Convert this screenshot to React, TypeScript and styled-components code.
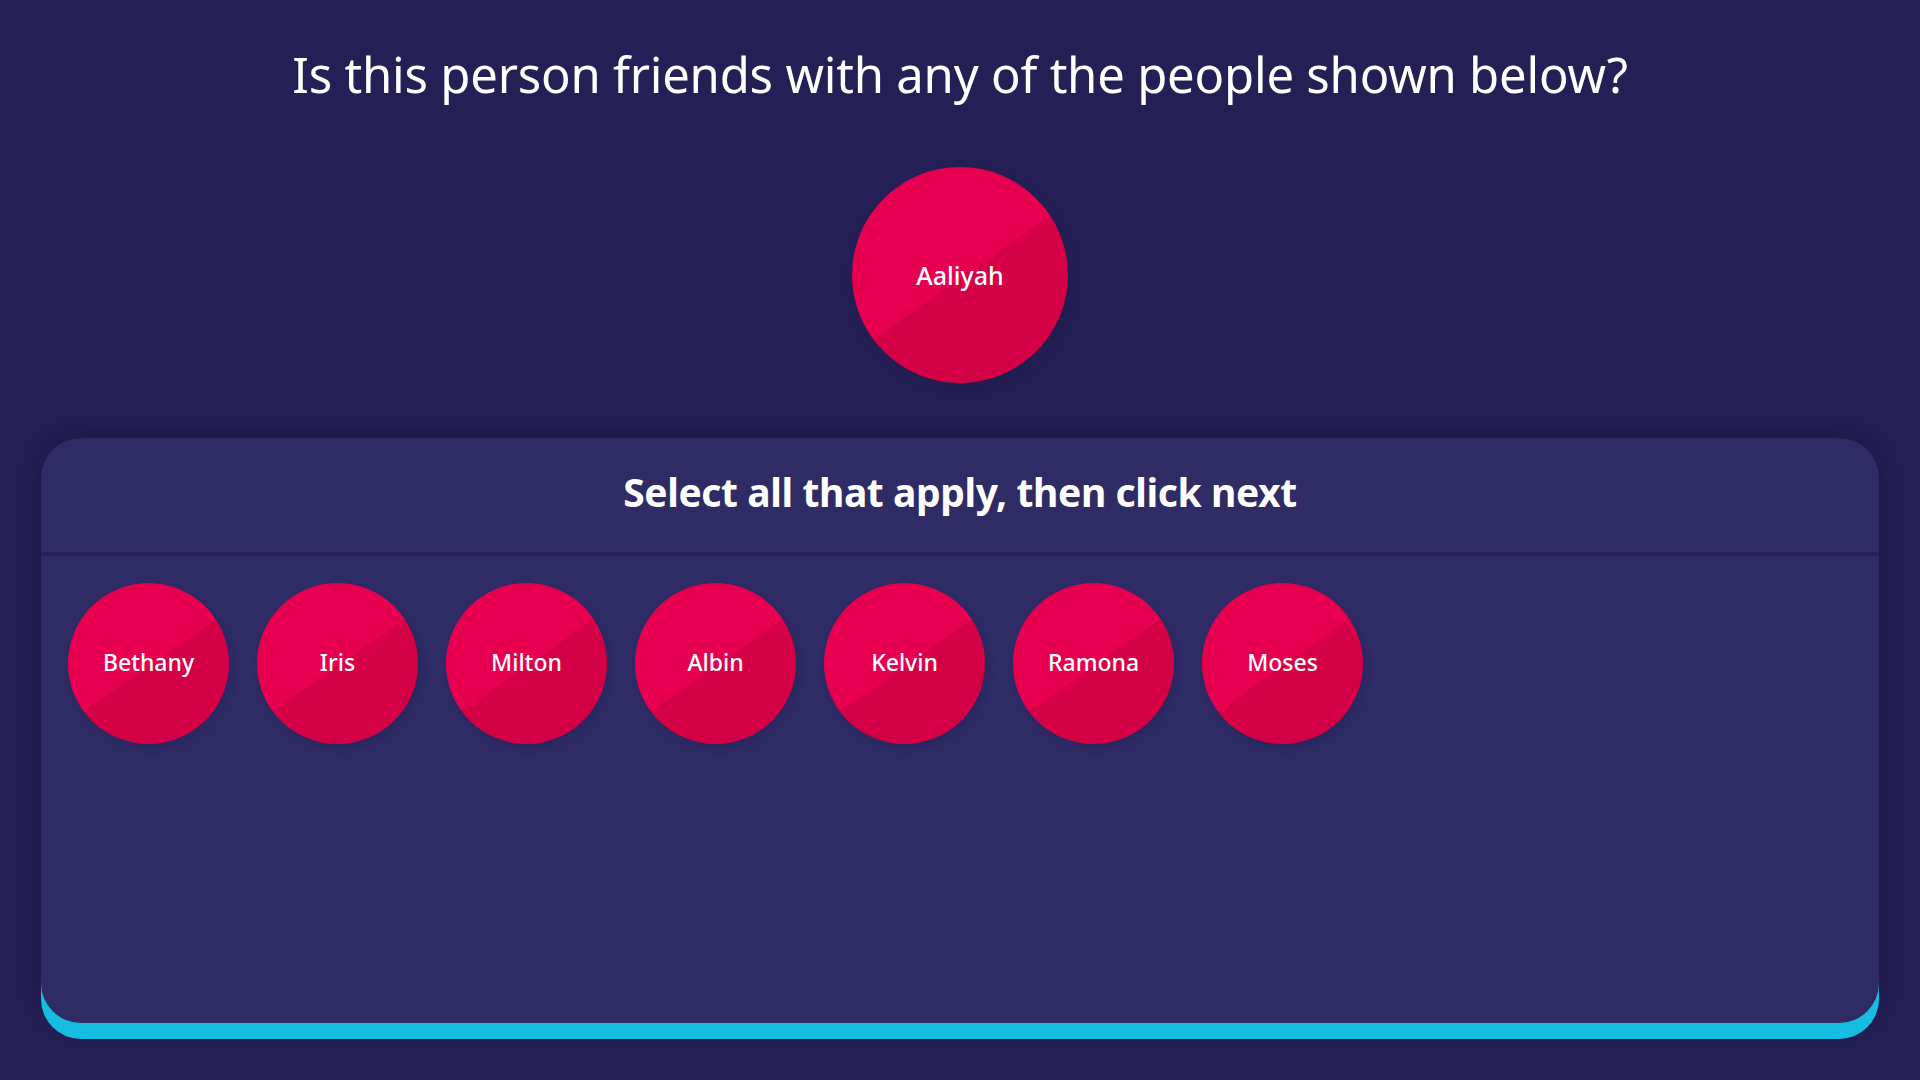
import React from "react";
import styled, { createGlobalStyle } from "styled-components";

const GlobalStyle = createGlobalStyle`
  html, body {
    margin: 0;
    padding: 0;
    background: #241f54;
  }
  body {
    font-family: "Noto Sans", "Open Sans", sans-serif;
    color: #ffffff;
  }
  * { box-sizing: border-box; }
`;

const Page = styled.main`
  min-height: 100vh;
  display: flex;
  flex-direction: column;
  align-items: stretch;
  padding: 40px 41px 57px;
  background: #241f54;
`;

const Question = styled.h1`
  margin: 0;
  text-align: center;
  font-size: 49px;
  line-height: 68px;
  font-weight: 400;
  letter-spacing: -0.2px;
  color: #ffffff;
`;

// A person bubble; $lift nudges the label up to sit optically centred
const Person = styled.button<{ $size: number; $font: number; $lift: number }>`
  flex: none;
  width: ${(p) => p.$size}px;
  height: ${(p) => p.$size}px;
  border: none;
  border-radius: 50%;
  padding: 0 0 ${(p) => p.$lift}px;
  display: flex;
  align-items: center;
  justify-content: center;
  background: linear-gradient(145deg, #e8004f 0%, #e6004f 51%, #d50045 51%, #d30045 100%);
  box-shadow: 3px 5px 10px rgba(20, 16, 60, 0.12);
  color: #ffffff;
  font-family: "Noto Sans", "Open Sans", sans-serif;
  font-size: ${(p) => p.$font}px;
  font-weight: 500;
  cursor: pointer;
`;

const Subject = styled.div`
  display: flex;
  justify-content: center;
  margin-top: 59px;
  margin-bottom: 55px;
`;

const Panel = styled.section`
  flex: 1;
  display: flex;
  flex-direction: column;
  background: #2e2b65;
  border-radius: 40px;
  box-shadow: 0 16px 0 #17bde0, 0 0 18px rgba(14, 10, 40, 0.35);
  overflow: hidden;
`;

const PanelHeader = styled.header`
  height: 118px;
  padding-bottom: 8px;
  display: flex;
  align-items: center;
  justify-content: center;
  border-bottom: 4px solid #262259;
`;

const Instruction = styled.h2`
  margin: 0;
  font-size: 39px;
  font-weight: 700;
  letter-spacing: -0.4px;
  color: #ffffff;
`;

const Choices = styled.div`
  display: flex;
  flex-wrap: wrap;
  align-content: flex-start;
  gap: 28px;
  padding: 27px;
`;

const friends = ["Bethany", "Iris", "Milton", "Albin", "Kelvin", "Ramona", "Moses"];

export default function App() {
  return (
    <>
      <GlobalStyle />
      <Page>
        <Question>Is this person friends with any of the people shown below?</Question>
        <Subject>
          <Person $size={216} $font={25} $lift={0}>
            Aaliyah
          </Person>
        </Subject>
        <Panel>
          <PanelHeader>
            <Instruction>Select all that apply, then click next</Instruction>
          </PanelHeader>
          <Choices>
            {friends.map((name) => (
              <Person key={name} $size={161} $font={23} $lift={4}>
                {name}
              </Person>
            ))}
          </Choices>
        </Panel>
      </Page>
    </>
  );
}
